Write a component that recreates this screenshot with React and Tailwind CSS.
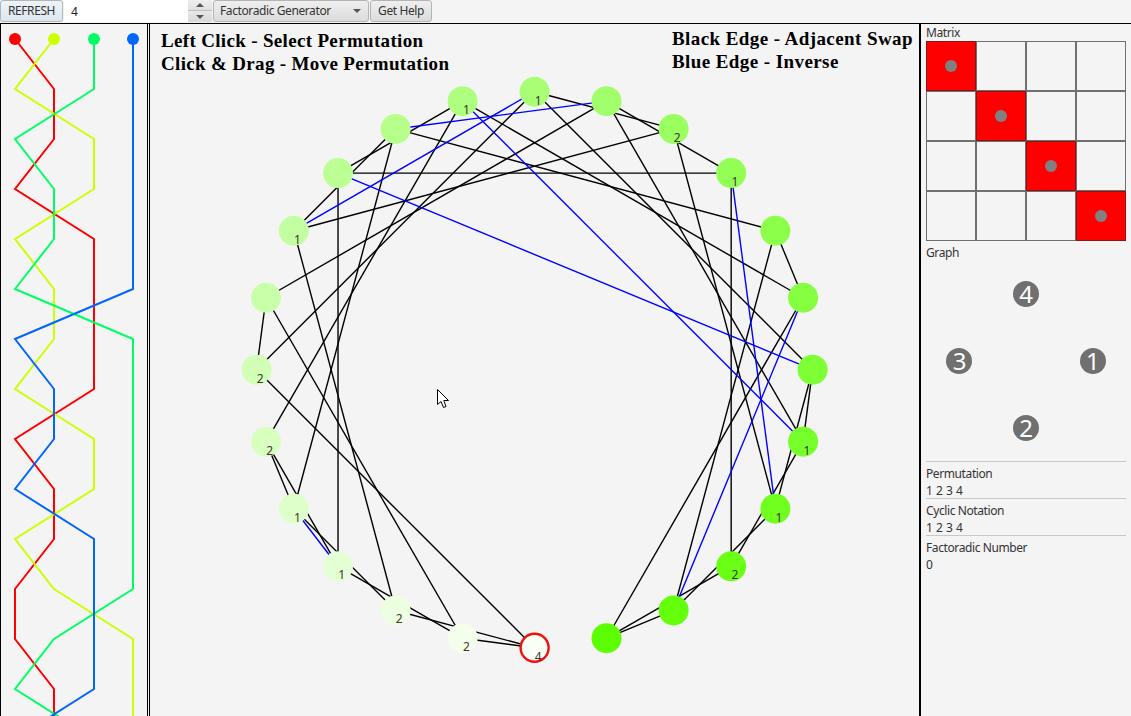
const uiFont = "font-['Noto_Sans',sans-serif]";

// every ordering of 1..4, in factoradic order
const perms = [];
for (const a of [1, 2, 3, 4]) {
    for (const b of [1, 2, 3, 4]) {
        for (const c of [1, 2, 3, 4]) {
            for (const d of [1, 2, 3, 4]) {
                if (new Set([a, b, c, d]).size === 4) perms.push([a, b, c, d]);
            }
        }
    }
}

const indexOf = (p) => perms.findIndex((q) => q.join('') === p.join(''));

const nodes = perms.map((p, i) => {
    const angle = (i * 15 * Math.PI) / 180;
    const t = i / 23;
    return {
        x: 534.6 - 278 * Math.sin(angle),
        y: 369.7 + 278 * Math.cos(angle),
        fill: `rgb(${Math.round(250 - 158 * t)}, 255, ${Math.round(245 - 245 * t)})`,
        fixed: p.filter((v, k) => v === k + 1).length,
    };
});

const blackEdges = [];
const blueEdges = [];
perms.forEach((p, i) => {
    // adjacent swap acts on the values, not the positions
    [1, 2, 3].forEach((v) => {
        const q = p.map((x) => (x === v ? v + 1 : x === v + 1 ? v : x));
        const j = indexOf(q);
        if (j > i) blackEdges.push([i, j]);
    });
    const inv = [0, 0, 0, 0];
    p.forEach((v, k) => {
        inv[v - 1] = k + 1;
    });
    const j = indexOf(inv);
    if (j > i) blueEdges.push([i, j]);
});

const columns = [15, 54, 94, 133];
const strands = [
    { color: '#ff0000', path: [0, 1, 1, 0, 2, 2, 2, 2, 0, 1, 1, 0, 0, 1, 1] },
    { color: '#ccff00', path: [1, 0, 2, 2, 0, 1, 1, 0, 2, 2, 0, 1, 3, 3, 3] },
    { color: '#00ff66', path: [2, 2, 0, 1, 1, 0, 3, 3, 3, 3, 3, 3, 1, 0, 2] },
    { color: '#0066ff', path: [3, 3, 3, 3, 3, 3, 0, 1, 1, 0, 2, 2, 2, 2, 0] },
];

function Braid() {
    return (
        <svg width="146" height="692" viewBox="1 24 146 692" className="block">
            {strands.map((s) => (
                <polyline
                    key={s.color}
                    points={s.path.map((c, i) => `${columns[c]},${39 + i * 50}`).join(' ')}
                    fill="none"
                    stroke={s.color}
                    strokeWidth="2"
                />
            ))}
            {strands.map((s, i) => (
                <circle key={s.color} cx={columns[i]} cy="39" r="6" fill={s.color} />
            ))}
        </svg>
    );
}

function PermutationGraph() {
    const line = (edge, color) => {
        const a = nodes[edge[0]];
        const b = nodes[edge[1]];
        return (
            <line
                key={edge.join('-') + color}
                x1={a.x}
                y1={a.y}
                x2={b.x}
                y2={b.y}
                stroke={color}
                strokeWidth="1.4"
            />
        );
    };

    return (
        <svg width="769" height="692" viewBox="150 24 769 692" className="absolute left-0 top-0 block">
            {blackEdges.map((e) => line(e, '#000000'))}
            {blueEdges.map((e) => line(e, '#0000ff'))}
            {nodes.map((n, i) => (
                <g key={i}>
                    <circle
                        cx={n.x}
                        cy={n.y}
                        r={i === 0 ? 14 : 15}
                        fill={n.fill}
                        stroke={i === 0 ? '#ee1111' : 'none'}
                        strokeWidth="2.4"
                    />
                    {n.fixed > 0 && (
                        <text
                            x={n.x + 3.5}
                            y={n.y + 13}
                            textAnchor="middle"
                            fontSize="12"
                            fill="#443333"
                            fontFamily="Noto Sans, sans-serif"
                        >
                            {n.fixed}
                        </text>
                    )}
                </g>
            ))}
        </svg>
    );
}

function Matrix() {
    return (
        <div className="grid grid-cols-4 w-[200px] h-[200px]">
            {Array.from({ length: 16 }).map((_, i) => {
                const on = i % 5 === 0;
                return (
                    <div
                        key={i}
                        className={`border flex items-center justify-center ${on ? 'bg-[#ff0000] border-[#8c1414]' : 'border-[#707070]'}`}
                    >
                        {on && <div className="w-3 h-3 rounded-full bg-[#808080]" />}
                    </div>
                );
            })}
        </div>
    );
}

function GraphDot({ n }) {
    return (
        <div className="flex items-center justify-center">
            <div className="w-[26px] h-[26px] rounded-full bg-[#707070] text-white text-[24px] leading-none flex items-center justify-center">
                {n}
            </div>
        </div>
    );
}

function InfoBlock({ title, value }) {
    return (
        <div className="border-t border-[#c8c8c8] h-[37px] pt-[3px] leading-[17px]">
            <div>{title}</div>
            <div className="tracking-normal">{value}</div>
        </div>
    );
}

function Cursor() {
    return (
        <svg width="12" height="20" viewBox="0 0 12 20" className="absolute left-[287px] top-[365px]">
            <path
                d="M0.5 0.5V15.5L4 12.5L6.5 18.5L9 17.5L6.8 11.5H11.5Z"
                fill="#ffffff"
                stroke="#000000"
                strokeWidth="1"
            />
        </svg>
    );
}

const btn = 'h-[22px] rounded-[3px] border border-[#b4b4b4] bg-gradient-to-b text-[#333333] flex items-center';

export default function App() {
    return (
        <div className={`w-[1131px] h-[716px] overflow-hidden flex flex-col bg-[#f4f4f4] text-[12px] tracking-[-0.4px] text-[#333333] ${uiFont}`}>
            {/* Toolbar */}
            <div className="h-[23px] flex items-start shrink-0">
                <button className={`${btn} w-[63px] justify-center border-[#4a9fe0] from-[#eef4f9] to-[#dde6ee]`}>REFRESH</button>
                <input
                    readOnly
                    value="4"
                    className="w-[124px] h-[22px] bg-white pl-[7px] outline-none ml-px text-[#222222]"
                />
                <div className="w-[24px] h-[22px] flex flex-col">
                    <div className="h-[11px] bg-gradient-to-b from-[#efefef] to-[#e0e0e0] border-b border-[#c0c0c0] flex items-center justify-center">
                        <div className="border-x-[4px] border-x-transparent border-b-[4px] border-b-[#555555]" />
                    </div>
                    <div className="h-[11px] bg-gradient-to-b from-[#e8e8e8] to-[#d8d8d8] flex items-center justify-center">
                        <div className="border-x-[4px] border-x-transparent border-t-[4px] border-t-[#555555]" />
                    </div>
                </div>
                <div className={`${btn} from-[#efefef] to-[#dcdcdc] w-[156px] ml-[1px] pl-[6px] justify-between`}>
                    <span>Factoradic Generator</span>
                    <div className="mr-[7px] border-x-[4px] border-x-transparent border-t-[4px] border-t-[#555555]" />
                </div>
                <button className={`${btn} from-[#efefef] to-[#dcdcdc] w-[62px] ml-[1px] justify-center`}>Get Help</button>
            </div>

            {/* Panels */}
            <div className="flex-1 flex border-t border-black min-h-0">
                <div className="w-[148px] border-x border-black shrink-0 overflow-hidden">
                    <Braid />
                </div>
                <div className="w-[772px] ml-px border-l border-r-2 border-black relative shrink-0 overflow-hidden">
                    <PermutationGraph />
                    <div className="relative flex justify-between pl-[11px] pr-[6px] font-['Liberation_Serif',serif] font-bold text-[19px] leading-[23px] text-black">
                        <div className="pt-[5px] tracking-[0.33px]">
                            <div>Left Click - Select Permutation</div>
                            <div>Click &amp; Drag - Move Permutation</div>
                        </div>
                        <div className="pt-[3px] tracking-[0.42px]">
                            <div>Black Edge - Adjacent Swap</div>
                            <div>Blue Edge - Inverse</div>
                        </div>
                    </div>
                    <Cursor />
                </div>
                <div className="flex-1 pl-[5px] pr-[5px]">
                    <div className="h-[17px] leading-[17px]">Matrix</div>
                    <Matrix />
                    <div className="h-[20px] leading-[24px]">Graph</div>
                    <div className="grid grid-cols-3 grid-rows-3 h-[200px]">
                        <div />
                        <GraphDot n={4} />
                        <div />
                        <GraphDot n={3} />
                        <div />
                        <GraphDot n={1} />
                        <div />
                        <GraphDot n={2} />
                        <div />
                    </div>
                    <InfoBlock title="Permutation" value="1 2 3 4" />
                    <InfoBlock title="Cyclic Notation" value="1 2 3 4" />
                    <InfoBlock title="Factoradic Number" value="0" />
                </div>
            </div>
        </div>
    );
}
